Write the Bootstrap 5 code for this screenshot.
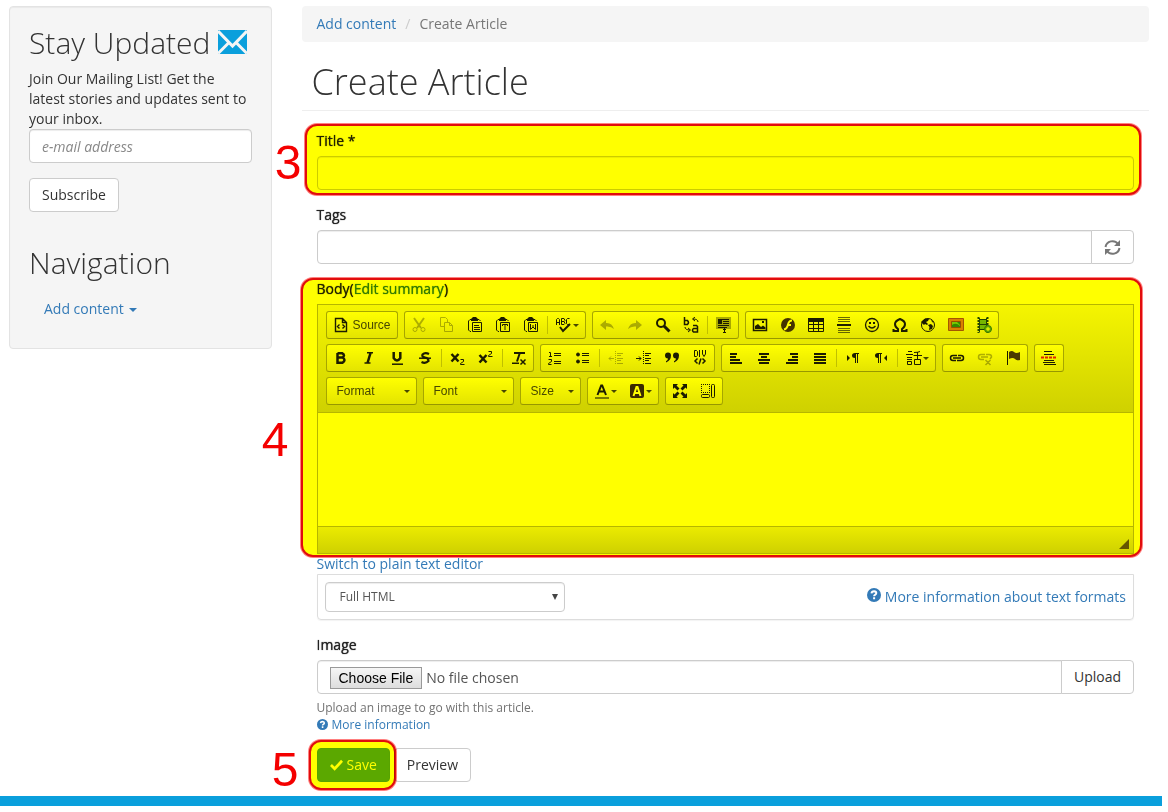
<!DOCTYPE html>
<html lang="en">
<head>
<meta charset="utf-8">
<meta name="viewport" content="width=device-width, initial-scale=1">
<title>Create Article</title>
<link href="https://cdn.jsdelivr.net/npm/bootstrap@5.3.0/dist/css/bootstrap.min.css" rel="stylesheet">
<style>
:root { --link: #337ab7; --line: #ccc; }
body { font-family: "Open Sans", "Liberation Sans", sans-serif; font-size: 14px; line-height: 20px; color: #333; background: #fff; }
a { color: var(--link); text-decoration: none; }
svg { flex: none; }
.page { padding: 6px 19px 0 9px; }
.page > .row { --bs-gutter-x: 30px; }
.form-control, .form-select, .btn { font-size: 14px; line-height: 20px; border-radius: 4px; padding: 6px 12px; border-color: var(--line); color: #555; }
.form-control { height: 34px; min-height: 34px; box-shadow: inset 0 1px 1px rgba(0,0,0,.075); }
.btn-plain { background: #fff; color: #333; border-color: var(--line); }
.form-label { color: #222; text-shadow: 0 0 1px currentColor; margin-bottom: 5px; display: block; line-height: 20px; }
.form-label a { text-shadow: 0 0 1px currentColor; }
.group { margin-bottom: 15px; }

.sidebar { background: #f5f5f5; border: 1px solid #e3e3e3; border-radius: 4px; padding: 19px; box-shadow: inset 0 1px 1px rgba(0,0,0,.05); }
.sidebar h2 { font-size: 30px; font-weight: 300; line-height: 33px; margin-bottom: 10px; white-space: nowrap; }
.sidebar h2 svg, .format-box svg { vertical-align: baseline; }
.sidebar .form-control::placeholder { font-style: italic; color: #888; }
.sidebar .navigation { margin-top: 34px; }
.sidebar .nav-link { color: var(--link); padding: 10px 15px; }
.dropdown-toggle::after { border-top-width: 4px; border-left-width: 4px; border-right-width: 4px; margin-left: 5px; vertical-align: 2px; }

.breadcrumb { --bs-breadcrumb-divider-color: #ccc; background: #f5f5f5; border-radius: 4px; padding: 8px 15px; margin-bottom: 20px; --bs-breadcrumb-item-padding-x: 9px; --bs-breadcrumb-item-active-color: #777; }
.page-title { font-size: 36px; font-weight: 300; line-height: 40px; padding: 0 10px 8px; border-bottom: 1px solid #eee; margin-bottom: 20px; }
.article-form { padding: 0 15px; }

/* numbered step markers laid over the form */
.step-mark { position: absolute; background: #ff0; border: 2px solid #e00d0d; box-shadow: 0 0 0 1px rgba(255,0,0,.5); border-radius: 12px; mix-blend-mode: multiply; pointer-events: none; }
.step-title .step-mark { inset: -7px -7px -5px -12px; }
.step-body .step-mark { inset: -1px -8px -3px -16px; }
.step-save .step-mark { inset: -8px -6px -8px -8px; }
.step-no { position: absolute; right: 100%; font: 48px/48px "Liberation Sans", Arial, sans-serif; color: #f40000; pointer-events: none; }
.step-title .step-no { top: 8px; margin-right: 15px; }
.step-body .step-no { top: 137px; margin-right: 28px; }
.step-save .step-no { top: -2px; margin-right: 18px; }

.editor { border: 1px solid #b6b6b6; font-family: "Liberation Sans", Arial, sans-serif; font-size: 12px; }
.toolbar { background: linear-gradient(#f5f5f5, #cfd1cf); border-bottom: 1px solid #b6b6b6; padding: 6px 8px 7px; display: grid; gap: 5px; }
.tool-row { display: flex; gap: 6px; }
.tools { display: flex; align-items: center; height: 28px; border: 1px solid #a6a6a6; border-bottom-color: #979797; border-radius: 3px; background: linear-gradient(#fff, #e4e4e4); }
.tools button { border: 0; background: none; padding: 0 6px; height: 26px; display: flex; align-items: center; color: #1c1c1c; }
.tools button:disabled { color: #1c1c1c; opacity: .32; }
.tools svg { width: 16px; height: 16px; fill: none; stroke: currentColor; }
.tools .src { gap: 4px; padding: 0 6px; color: #474747; }
.tools .src svg { color: #1c1c1c; }
.tools .has-arrow::after, .combo::after { content: ""; border: 3px solid transparent; border-top-color: #474747; border-bottom: 0; margin-left: 1px; }
.tools .rule { width: 1px; height: 18px; margin: 0 2px; background: #c0c0c0; }
.tools .combo { justify-content: space-between; width: 89px; padding: 0 6px 0 10px; color: #474747; }
.tools .combo.short { width: 59px; }
.editor textarea { display: block; width: 100%; height: 113px; border: 0; resize: none; outline: 0; padding: 8px; }
.editor-foot { height: 27px; border-top: 1px solid #b6b6b6; background: linear-gradient(#ebebeb, #cfd1cf); display: flex; justify-content: flex-end; align-items: flex-end; padding: 0 4px 4px; }
.grip { border: 5px solid transparent; border-right-color: #654; border-bottom-color: #654; }

.format-box { border: 1px solid #ddd; border-radius: 0 0 4px 4px; padding: 7px; box-shadow: 0 1px 1px rgba(0,0,0,.05); }
.format-box .form-select { width: 240px; height: 30px; font-size: 12px; padding: 4px 14px; background-image: url("data:image/svg+xml,%3Csvg xmlns='http://www.w3.org/2000/svg' viewBox='0 0 6 6'%3E%3Cpath d='M0 0h6L3 6z' fill='%23444'/%3E%3C/svg%3E"); background-size: 6px 6px; background-position: right 6px center; box-shadow: inset 0 1px 1px rgba(0,0,0,.075); }
.form-control[type=file] { overflow: hidden; }
.form-control[type=file]::file-selector-button { font: 14px/18px "Liberation Sans", Arial, sans-serif; color: #000; background: linear-gradient(#f6f6f6, #ddd) !important; border: 1px solid #999; border-radius: 0; padding: 1px 8px; margin: 0 4px 0 0; }
.fine { font-size: 12px; line-height: 17px; margin: 5px 0 15px; color: #737373; }
.btn-save, .btn-save:hover { background: #5ba85b; border-color: #58a458; color: #fff; }
.foot-bar { height: 10px; background: #0a9fdc; margin: 14px 6px 0 0; }
</style>
</head>
<body>
<svg class="d-none" xmlns="http://www.w3.org/2000/svg">
  <symbol id="source" viewBox="0 0 16 16"><path stroke-width="1.400" d="M2.500 1.500h7l4 4v9h-11zM9.500 1.500v4h4M6.500 7.500l-2 2 2 2M9.500 7.500l2 2-2 2"/></symbol>
  <symbol id="cut" viewBox="0 0 16 16"><path stroke-width="2" d="M3 1l7 10M13 1L6 11"/><circle cx="4" cy="12.500" r="2"/><circle cx="12" cy="12.500" r="2"/></symbol>
  <symbol id="copy" viewBox="0 0 16 16"><path d="M5 9.500H1.500v-9h5l2 2V5M5.500 5.500h5l3 3v6h-8zM10.500 5.500v3h3"/></symbol>
  <symbol id="clip" viewBox="0 0 16 16"><path d="M4 2.500H3L1.500 4v9L3 14.500h1M11 2.500h1L13.500 4M5.500 5.500h9v9h-9z"/><path stroke="none" fill="currentColor" d="M4 2l2-2h3l2 2v2H4z"/></symbol>
  <symbol id="paste" viewBox="0 0 16 16"><use href="#clip"/><path d="M7 8.500h5M7 10.500h6M7 12.500h6"/></symbol>
  <symbol id="pastetext" viewBox="0 0 16 16"><use href="#clip"/><path d="M7.500 9V7.500h5V9M10 7.500V13"/></symbol>
  <symbol id="pasteword" viewBox="0 0 16 16"><use href="#clip"/><path d="M7.500 7v5.500L10 10l2.500 2.500V7M10 8v2"/></symbol>
  <symbol id="spell" viewBox="0 0 16 16"><path d="M.5 8V2.500l1-1h1l1 1V8M.5 5.500h3M5.500 1.500v6h2.500l1-1-1-2 1-1-1-2zM5.500 4.500H8M13.500 1.500h-2l-1 1v4l1 1h2"/><path stroke-width="2" d="M4 10l3 4 7-7"/></symbol>
  <symbol id="undo" viewBox="0 0 16 16"><path stroke="none" fill="currentColor" d="M1 8l6-5v3q6-.5 8 6-3-3-8-2.500V13z"/></symbol>
  <symbol id="redo" viewBox="0 0 16 16"><path stroke="none" fill="currentColor" d="M15 8L9 3v3q-6-.5-8 6 3-3 8-2.500V13z"/></symbol>
  <symbol id="find" viewBox="0 0 16 16"><circle cx="6" cy="6" r="4" stroke-width="2"/><path stroke-width="3" d="M9 9l5.500 5.500"/></symbol>
  <symbol id="replace" viewBox="0 0 16 16"><path stroke-width="1.500" d="M1.500 0v7.500h3q2-2 0-4h-3M10 8.500h3.500l1 1v5.500h-4q-2-2 0-3.500h4"/><path d="M15 5q0-3-5-3M12 0L9.500 2 12 4M2 10q0 3 5 3M5 11l2.500 2L5 15"/></symbol>
  <symbol id="selectall" viewBox="0 0 16 16"><path stroke="none" fill="currentColor" opacity=".35" d="M0 0h15v12H0z"/><path d="M2 2.500h11M7 4.500h6M7 6.500h6M2 8.500h11M2 10.500h9M8.500 11v4M7 15.500h3M7 12.500h3"/><path stroke="none" fill="currentColor" d="M2 3h4v4H2z"/></symbol>
  <symbol id="picture" viewBox="0 0 16 16"><path stroke-width="1.500" d="M1.500 2.500h13v11h-13z"/><path stroke="none" fill="currentColor" d="M3 12V9l3-2 3 3 2-1.500 2.500 2V12zM10 4h2v2h-2z"/></symbol>
  <symbol id="flash" viewBox="0 0 16 16"><circle cx="8" cy="8" r="7" fill="#432" stroke="none"/><path stroke="#fff" stroke-width="2" d="M12 3.500q-3 0-4 4-1 4.500-4 5M7 8h4"/></symbol>
  <symbol id="grid" viewBox="0 0 16 16"><path d="M.5 4v10.500h15V4M.5 7.500h15M.5 11.500h15M5.500 4v10M10.500 4v10"/><path stroke="none" fill="currentColor" d="M0 1h16v4H0z"/></symbol>
  <symbol id="hr" viewBox="0 0 16 16"><path stroke-width="2" d="M1 8h14"/><path opacity=".65" d="M2 .5h12M2 2.500h12M2 4.500h12M2 11.500h12M2 13.500h12M2 15.500h12"/></symbol>
  <symbol id="smile" viewBox="0 0 16 16"><circle cx="8" cy="8" r="6.500" stroke-width="1.300"/><path stroke-width="2" d="M5 6h2M9 6h2"/><path stroke-width="1.300" d="M4.500 9q3.500 4 7 0"/></symbol>
  <symbol id="omega" viewBox="0 0 16 16"><path stroke-width="2" d="M1.500 12v2H6v-2Q3 10 3 7t5-5q5 2 5 5t-3 5v2h4.500v-2"/></symbol>
  <symbol id="globe" viewBox="0 0 16 16"><circle cx="8" cy="8" r="6.500"/><path stroke="none" fill="currentColor" d="M2 4l3-2.500 4 .5-1 2-2 1 2 2-1 1-2-1-1 1-3-3zM8 8l3-1 2 2-1 3-3 1 .5-3zM11 2l3 4-2-1z"/></symbol>
  <symbol id="frame" viewBox="0 0 16 16"><path fill="#d98236" stroke="#a4571f" d="M.5 1.500h15v12H.5z"/><path fill="#7ac943" stroke="#974f20" d="M3.500 4.500h9v6h-9z"/><path stroke="none" fill="#318a34" d="M4 8q4-3 8 1v1H4zM9 5h3v3z"/></symbol>
  <symbol id="film" viewBox="0 0 16 16"><path fill="#75b54d" stroke="#243" d="M3.500 1v14M10.500 1v14M3.500 2.500h7v5h-7zM3.500 7.500h7v5h-7z"/><path stroke="#243" stroke-width="2" stroke-dasharray="2 1" d="M2.500 0v16M11.500 0v16"/><circle cx="12" cy="12" r="3.500" fill="#65a93d" stroke="#397c20"/><path stroke="#fff" d="M10 12h4M12 10v4"/></symbol>
  <symbol id="bold" viewBox="0 0 16 16"><path stroke-width="2.500" d="M4.500 3.200h4.500q4 2.200 0 4.300H4.500M4.500 7.500h5q4 2.500 0 5.200h-5zM4.500 3v10"/></symbol>
  <symbol id="italic" viewBox="0 0 16 16"><path stroke-width="1.500" d="M6 2.700h6M3.500 13h6"/><path stroke-width="2.500" d="M9.500 3l-3 10"/></symbol>
  <symbol id="under" viewBox="0 0 16 16"><path stroke-width="2.500" d="M4.700 2v6q3.300 5 6.600 0V2"/><path stroke-width="1.500" d="M3 14.200h11"/></symbol>
  <symbol id="strike" viewBox="0 0 16 16"><path stroke-width="2.200" d="M12 4Q8 2 5.500 4.500 4.500 7 8 7.500t3.500 3.500q-3 3-7 1"/><path stroke-width="1.500" d="M2 8.200h12"/></symbol>
  <symbol id="sub" viewBox="0 0 16 16"><path stroke-width="2.500" d="M1.500 4l7 7.500M8.500 4l-7 7.500"/><path d="M10.500 9.500h3v2l-3 2v1h4"/></symbol>
  <symbol id="sup" viewBox="0 0 16 16"><path stroke-width="2.500" d="M1.500 5l7 7.500M8.500 5l-7 7.500"/><path d="M10.500 1.500h3v2l-3 2v1h4"/></symbol>
  <symbol id="unformat" viewBox="0 0 16 16"><path stroke-width="2" d="M3 3h11M8.800 3L6 11.500"/><path stroke-width="1.500" d="M1 13.200h7M9.500 9.500l5 5M14.500 9.500l-5 5"/></symbol>
  <symbol id="ol" viewBox="0 0 16 16"><path d="M2 2.500h1.500v4M2 6.500h3M1.500 9.500h3v2l-3 2v1h3M7 3.500h7M7 5.500h7M7 11.500h7M7 13.500h7"/></symbol>
  <symbol id="ul" viewBox="0 0 16 16"><circle cx="3" cy="4.500" r="1.500" fill="currentColor"/><circle cx="3" cy="11.500" r="1.500" fill="currentColor"/><path d="M7 3.500h7M7 5.500h7M7 10.500h7M7 12.500h7"/></symbol>
  <symbol id="indent" viewBox="0 0 16 16"><path d="M0 8.500h5M3 6.500l2 2-2 2M9 3.500h6M9 5.500h4M9 8.500h6M9 10.500h4M9 13.500h6"/><path stroke-dasharray="1 1" d="M7.500 1v14"/></symbol>
  <symbol id="outdent" viewBox="0 0 16 16"><path d="M1 8.500h5M3 6.500l-2 2 2 2M9 3.500h6M9 5.500h4M9 8.500h6M9 10.500h4M9 13.500h6"/><path stroke-dasharray="1 1" d="M7.500 1v14"/></symbol>
  <symbol id="quote" viewBox="0 0 16 16"><path stroke="none" fill="currentColor" d="M1 5.500a3 3 0 0 1 6 0q0 5-5 7v-1.200q2-1 2-2.800-3 0-3-3zM9 5.500a3 3 0 0 1 6 0q0 5-5 7v-1.200q2-1 2-2.800-3 0-3-3z"/></symbol>
  <symbol id="div" viewBox="0 0 16 16"><path d="M2.500.5v6h2l1-1v-4l-1-1zM7.500 0v7M10.500 0v4l1.500 2.500L13.500 4V0"/><path stroke-width="1.500" d="M5.500 8.500L3 11l2.500 2.500M10.500 8.500L13 11l-2.500 2.500M9 8.500l-2 6"/></symbol>
  <symbol id="left" viewBox="0 0 16 16"><path stroke-width="2" d="M2 4h7M2 7h6M2 10h10M2 13h12"/></symbol>
  <symbol id="center" viewBox="0 0 16 16"><path stroke-width="2" d="M3 4h10M5 7h6M2 10h12M3 13h10"/></symbol>
  <symbol id="right" viewBox="0 0 16 16"><path stroke-width="2" d="M6 4h8M8 7h6M4 10h10M2 13h12"/></symbol>
  <symbol id="justify" viewBox="0 0 16 16"><path stroke-width="2" d="M2 4h12M2 7h12M2 10h12M2 13h12"/></symbol>
  <symbol id="ltr" viewBox="0 0 16 16"><path stroke="none" fill="currentColor" d="M2 5l3 3-3 3zM14 3v1h-1v9h-1V4h-1v9h-1V8Q7 8 7 5.500T10 3z"/></symbol>
  <symbol id="rtl" viewBox="0 0 16 16"><path stroke="none" fill="currentColor" d="M14 5l-3 3 3 3zM9 3v1H8v9H7V4H6v9H5V8Q2 8 2 5.500T5 3z"/></symbol>
  <symbol id="lang" viewBox="0 0 16 16"><path d="M2 1.500h4M0 4.500h7M1 7.500h5M1 9.500h5M1.500 11v3.500h4V11.500h-4M8 2.500q4 0 6-1M11.500 2v7M7.500 5.500H16M8.500 9.500h6v5h-6z"/></symbol>
  <symbol id="link" viewBox="0 0 16 16"><path stroke-width="1.500" d="M8 5.500H4Q1.500 5.500 1.500 8T4 10.500h3M8 10.500h4q2.500 0 2.500-2.500T12 5.500H9M4 8h8"/></symbol>
  <symbol id="unlink" viewBox="0 0 16 16"><path stroke-width="1.500" d="M8 4.500H4Q1.500 4.500 1.500 7T4 9.500h3M9 4.500h3q2.500 0 2.500 2.500L13 9M4 7h7M8.500 10l5 5M13.500 10l-5 5"/></symbol>
  <symbol id="flag" viewBox="0 0 16 16"><path d="M2.500 1v14"/><path stroke="none" fill="#4a3a2a" d="M4 2q3-2 5 0t6 0v8q-3 1-5-1T4 9z"/></symbol>
  <symbol id="break" viewBox="0 0 16 16"><path d="M3 1.500h8M3 4.500h10M3 10.500h10M2 12.500h12M3 14.500h12"/><path stroke="#d22" stroke-width="2" stroke-dasharray="3 1" d="M0 7.500h16"/></symbol>
  <symbol id="color" viewBox="0 0 16 16"><path stroke-width="2" d="M3.500 12L7.200 2.500h1L12 12M5 8.500h6"/><path stroke-width="2" opacity=".55" d="M1 15h14"/></symbol>
  <symbol id="bgcolor" viewBox="0 0 16 16"><rect x="1" y="1" width="14" height="14" rx="2" fill="#3a2a22" stroke="none"/><path stroke="#fff" stroke-width="2" d="M4.500 13L7.500 4h1l3 9M5.500 10h5"/></symbol>
  <symbol id="max" viewBox="0 0 16 16"><path stroke="none" fill="currentColor" d="M1 1h5L4.500 2.500l3 3-2 2-3-3L1 6zM15 1v5l-1.500-1.500-3 3-2-2 3-3L10 1zM1 15v-5l1.500 1.500 3-3 2 2-3 3L6 15zM15 15h-5l1.500-1.500-3-3 2-2 3 3L15 10z"/></symbol>
  <symbol id="blocks" viewBox="0 0 16 16"><path stroke-dasharray="1 1" d="M1 1.500h9M1.500 1v9M9.500 1v9M1 9.500h9"/><rect x="1.500" y="11.500" width="8" height="3" rx="1"/><rect x="11.500" y="1.500" width="3" height="13" rx="1"/></symbol>
  <symbol id="help" viewBox="0 0 14 14"><circle cx="7" cy="7" r="7" fill="#337ab7"/><path d="M4.500 5.300Q4.700 3.200 7.100 3.200q2.200.1 2.200 1.900 0 1-1.300 1.700-.9.500-.9 1.500M7.100 9.300v2" fill="none" stroke="#fff" stroke-width="2"/></symbol>
</svg>

<div class="container-fluid page">
  <div class="row">
    <aside class="col-3">
      <div class="sidebar">
        <h2>Stay Updated <svg width="29" height="24" viewBox="0 0 29 24" aria-hidden="true"><path fill="#0a9fdc" d="M0 0h29v24H0z"/><path d="M0 1l14.500 15L29 1M0 23.500l10-10M29 23.500l-10-10" fill="none" stroke="#f5f5f5" stroke-width="3"/></svg></h2>
        <form>
          <label for="email">Join Our Mailing List! Get the latest stories and updates sent to your inbox.</label>
          <input class="form-control group" type="email" id="email" placeholder="e-mail address">
          <button type="button" class="btn btn-plain">Subscribe</button>
        </form>
        <h2 class="navigation">Navigation</h2>
        <nav class="nav"><a class="nav-link dropdown-toggle" href="#">Add content</a></nav>
      </div>
    </aside>

    <main class="col-9">
      <nav aria-label="breadcrumb">
        <ol class="breadcrumb">
          <li class="breadcrumb-item"><a href="#">Add content</a></li>
          <li class="breadcrumb-item active" aria-current="page">Create Article</li>
        </ol>
      </nav>
      <h1 class="page-title">Create Article</h1>

      <form class="article-form">
        <div class="group position-relative step-title">
          <label class="form-label" for="title">Title *</label>
          <input class="form-control" type="text" id="title">
          <span class="step-mark"></span><span class="step-no">3</span>
        </div>

        <div class="group">
          <label class="form-label" for="tags">Tags</label>
          <div class="input-group">
            <input class="form-control" type="text" id="tags">
            <button type="button" class="btn btn-plain d-flex align-items-center" aria-label="Refresh tags">
              <svg width="17" height="17" viewBox="0 0 17 17" fill="none" stroke="#777" stroke-width="2"><path d="M1.500 8A7 7 0 0 1 14 5M15.500 9A7 7 0 0 1 3 12"/><path d="M16 1v6h-6zM1 16v-6h6z" fill="#777" stroke="none"/></svg>
            </button>
          </div>
        </div>

        <div class="position-relative step-body">
          <label class="form-label" for="body">Body(<a href="#">Edit summary</a>)</label>
          <div class="editor">
            <div class="toolbar">
              <div class="tool-row">
                <div class="tools"><button type="button" class="src"><svg><use href="#source"/></svg>Source</button></div>
                <div class="tools">
                  <button type="button" disabled aria-label="Cut"><svg><use href="#cut"/></svg></button>
                  <button type="button" disabled aria-label="Copy"><svg><use href="#copy"/></svg></button>
                  <button type="button" aria-label="Paste"><svg><use href="#paste"/></svg></button>
                  <button type="button" aria-label="Paste as text"><svg><use href="#pastetext"/></svg></button>
                  <button type="button" aria-label="Paste from Word"><svg><use href="#pasteword"/></svg></button>
                  <span class="rule"></span>
                  <button type="button" class="has-arrow" aria-label="Spell check"><svg><use href="#spell"/></svg></button>
                </div>
                <div class="tools">
                  <button type="button" disabled aria-label="Undo"><svg><use href="#undo"/></svg></button>
                  <button type="button" disabled aria-label="Redo"><svg><use href="#redo"/></svg></button>
                  <button type="button" aria-label="Find"><svg><use href="#find"/></svg></button>
                  <button type="button" aria-label="Replace"><svg><use href="#replace"/></svg></button>
                  <span class="rule"></span>
                  <button type="button" aria-label="Select all"><svg><use href="#selectall"/></svg></button>
                </div>
                <div class="tools">
                  <button type="button" aria-label="Image"><svg><use href="#picture"/></svg></button>
                  <button type="button" aria-label="Flash"><svg><use href="#flash"/></svg></button>
                  <button type="button" aria-label="Table"><svg><use href="#grid"/></svg></button>
                  <button type="button" aria-label="Horizontal line"><svg><use href="#hr"/></svg></button>
                  <button type="button" aria-label="Smiley"><svg><use href="#smile"/></svg></button>
                  <button type="button" aria-label="Special character"><svg><use href="#omega"/></svg></button>
                  <button type="button" aria-label="IFrame"><svg><use href="#globe"/></svg></button>
                  <button type="button" aria-label="Image library"><svg><use href="#frame"/></svg></button>
                  <button type="button" aria-label="Add video"><svg><use href="#film"/></svg></button>
                </div>
              </div>
              <div class="tool-row">
                <div class="tools">
                  <button type="button" aria-label="Bold"><svg><use href="#bold"/></svg></button>
                  <button type="button" aria-label="Italic"><svg><use href="#italic"/></svg></button>
                  <button type="button" aria-label="Underline"><svg><use href="#under"/></svg></button>
                  <button type="button" aria-label="Strike through"><svg><use href="#strike"/></svg></button>
                  <span class="rule"></span>
                  <button type="button" aria-label="Subscript"><svg><use href="#sub"/></svg></button>
                  <button type="button" aria-label="Superscript"><svg><use href="#sup"/></svg></button>
                  <span class="rule"></span>
                  <button type="button" aria-label="Remove format"><svg><use href="#unformat"/></svg></button>
                </div>
                <div class="tools">
                  <button type="button" aria-label="Numbered list"><svg><use href="#ol"/></svg></button>
                  <button type="button" aria-label="Bulleted list"><svg><use href="#ul"/></svg></button>
                  <span class="rule"></span>
                  <button type="button" disabled aria-label="Decrease indent"><svg><use href="#outdent"/></svg></button>
                  <button type="button" aria-label="Increase indent"><svg><use href="#indent"/></svg></button>
                  <button type="button" aria-label="Block quote"><svg><use href="#quote"/></svg></button>
                  <button type="button" aria-label="Div container"><svg><use href="#div"/></svg></button>
                </div>
                <div class="tools">
                  <button type="button" aria-label="Align left"><svg><use href="#left"/></svg></button>
                  <button type="button" aria-label="Center"><svg><use href="#center"/></svg></button>
                  <button type="button" aria-label="Align right"><svg><use href="#right"/></svg></button>
                  <button type="button" aria-label="Justify"><svg><use href="#justify"/></svg></button>
                  <span class="rule"></span>
                  <button type="button" aria-label="Left to right"><svg><use href="#ltr"/></svg></button>
                  <button type="button" aria-label="Right to left"><svg><use href="#rtl"/></svg></button>
                  <span class="rule"></span>
                  <button type="button" class="has-arrow" aria-label="Language"><svg><use href="#lang"/></svg></button>
                </div>
                <div class="tools">
                  <button type="button" aria-label="Link"><svg><use href="#link"/></svg></button>
                  <button type="button" disabled aria-label="Unlink"><svg><use href="#unlink"/></svg></button>
                  <button type="button" aria-label="Anchor"><svg><use href="#flag"/></svg></button>
                </div>
                <div class="tools"><button type="button" aria-label="Teaser break"><svg><use href="#break"/></svg></button></div>
              </div>
              <div class="tool-row">
                <div class="tools"><button type="button" class="combo">Format</button></div>
                <div class="tools"><button type="button" class="combo">Font</button></div>
                <div class="tools"><button type="button" class="combo short">Size</button></div>
                <div class="tools">
                  <button type="button" class="has-arrow" aria-label="Text color"><svg><use href="#color"/></svg></button>
                  <button type="button" class="has-arrow" aria-label="Background color"><svg><use href="#bgcolor"/></svg></button>
                </div>
                <div class="tools">
                  <button type="button" aria-label="Maximize"><svg><use href="#max"/></svg></button>
                  <button type="button" aria-label="Show blocks"><svg><use href="#blocks"/></svg></button>
                </div>
              </div>
            </div>
            <textarea id="body"></textarea>
            <div class="editor-foot"><span class="grip"></span></div>
          </div>
          <span class="step-mark"></span><span class="step-no">4</span>
        </div>

        <a class="d-block" href="#">Switch to plain text editor</a>
        <div class="format-box group d-flex justify-content-between align-items-center">
          <select class="form-select" aria-label="Text format"><option>Full HTML</option></select>
          <a href="#"><svg width="14" height="14" aria-hidden="true"><use href="#help"/></svg> More information about text formats</a>
        </div>

        <label class="form-label" for="image">Image</label>
        <div class="input-group">
          <input class="form-control" type="file" id="image">
          <button type="button" class="btn btn-plain">Upload</button>
        </div>
        <div class="fine">
          <div>Upload an image to go with this article.</div>
          <a class="d-flex align-items-center gap-1" href="#"><svg width="11" height="11" viewBox="0 0 14 14" aria-hidden="true"><use href="#help"/></svg>More information</a>
        </div>

        <div class="d-flex gap-1">
          <div class="position-relative step-save">
            <button type="button" class="btn btn-save d-flex align-items-center gap-1"><svg width="13" height="12" viewBox="0 0 14 12" fill="none" stroke="#fff" stroke-width="3" aria-hidden="true"><path d="M1 6l4 4 8-8.500"/></svg>Save</button>
            <span class="step-mark"></span><span class="step-no">5</span>
          </div>
          <button type="button" class="btn btn-plain">Preview</button>
        </div>
      </form>
    </main>
  </div>
</div>
<div class="foot-bar"></div>
<script src="https://cdn.jsdelivr.net/npm/bootstrap@5.3.0/dist/js/bootstrap.bundle.min.js"></script>
</body>
</html>
